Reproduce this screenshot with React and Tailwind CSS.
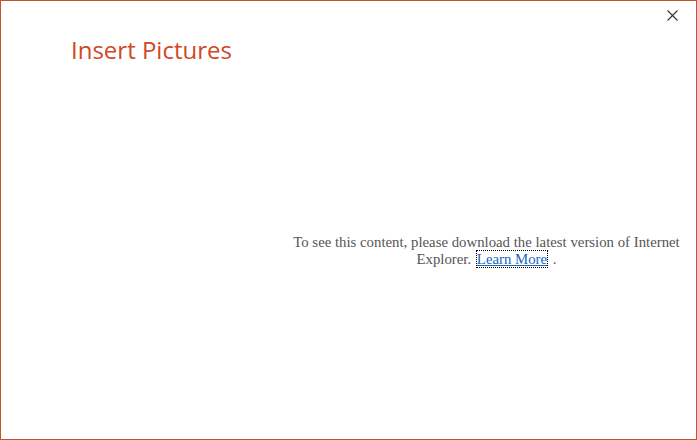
export default function App() {
  return (
    <div className="w-[697px] h-[440px] bg-white border border-[#c9522b] relative flex flex-col overflow-hidden">
      <button className="absolute right-[18px] top-[8px] w-[12px] h-[12px] flex items-center justify-center">
        <svg width="11" height="11" viewBox="0 0 11 11">
          <path d="M0.5 0.5 L10.5 10.5 M10.5 0.5 L0.5 10.5" stroke="#333" strokeWidth="1.1" fill="none" />
        </svg>
      </button>
      <h1 className="pl-[70px] pt-[32px] text-[24px] leading-[34px] text-[#d24726] font-normal" style={{ fontFamily: '"Open Sans", "Noto Sans", sans-serif' }}>
        Insert Pictures
      </h1>
      <div className="flex pl-[292px] pr-[16px] pt-[167px]">
        <p className="w-[392px] text-center text-[14.8px] leading-[17px] text-[#555]" style={{ fontFamily: '"Liberation Serif", serif' }}>
          To see this content, please download the latest version of Internet Explorer.{' '}
          <a className="ml-[2px] text-[#1565c0] underline outline outline-1 outline-dotted outline-black" href="#">Learn More</a>{' '}<span className="ml-[2px]">.</span>
        </p>
      </div>
    </div>
  );
}
